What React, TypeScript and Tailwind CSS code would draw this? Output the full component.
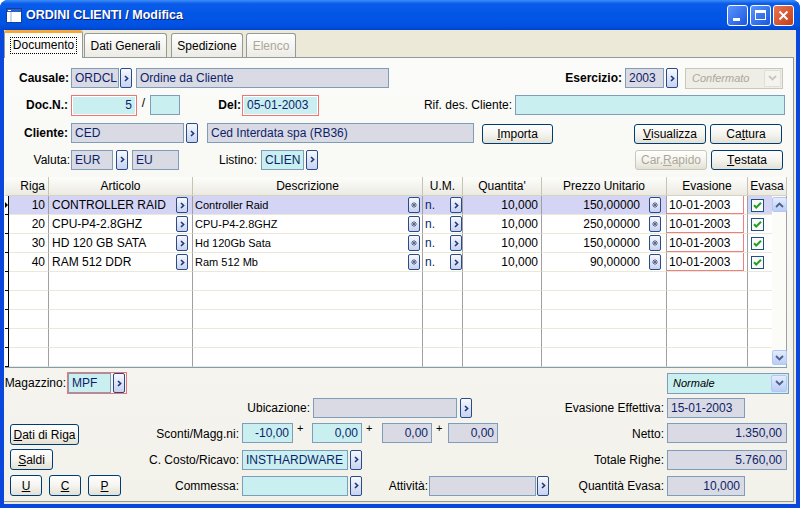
import React from 'react';

type Kids = { className?: string; children?: React.ReactNode };

function Chevron() {
  return (
    <svg width="5" height="7" viewBox="0 0 5 7">
      <path d="M1 1l2.6 2.5L1 6" fill="none" stroke="#1c3879" strokeWidth="1.6" />
    </svg>
  );
}

function ChevronDown({ color = '#4d6185' }: { color?: string }) {
  return (
    <svg width="9" height="6" viewBox="0 0 9 6">
      <path d="M1 1l3.5 3.5L8 1" fill="none" stroke={color} strokeWidth="1.8" />
    </svg>
  );
}

function ChevronUp() {
  return (
    <svg width="9" height="6" viewBox="0 0 9 6">
      <path d="M1 5l3.5-3.5L8 5" fill="none" stroke="#4d6185" strokeWidth="1.8" />
    </svg>
  );
}

function ArrowBtn({ className = 'h-[20px]' }: { className?: string }) {
  return (
    <div
      className={`w-[12px] shrink-0 rounded-[2px] border border-[#294b86] bg-gradient-to-b from-[#f7f8ff] to-[#c8d2f0] flex items-center justify-center ${className}`}
    >
      <Chevron />
    </div>
  );
}

function StarBtn() {
  return (
    <div className="w-[12px] h-[16px] shrink-0 rounded-[2px] border border-[#294b86] bg-gradient-to-b from-[#f7f8ff] to-[#c8d2f0] flex items-center justify-center">
      <svg width="6" height="6" viewBox="0 0 6 6">
        <path d="M3 0v6M0 3h6M1 1l4 4M5 1L1 5" stroke="#5a6787" strokeWidth="1" />
      </svg>
    </div>
  );
}

function Field({ className = '', children, cyan, right }: Kids & { cyan?: boolean; right?: boolean }) {
  return (
    <div
      className={`h-[20px] shrink-0 border border-[#7f9db9] ${cyan ? 'bg-[#c9eff0]' : 'bg-[#d9dae3]'} flex items-center px-[3px] text-[12px] text-[#0d1f6b] whitespace-nowrap overflow-hidden ${right ? 'justify-end' : ''} ${className}`}
    >
      {children}
    </div>
  );
}

function RedField({ className = '', children, right }: Kids & { right?: boolean }) {
  return (
    <div
      className={`h-[21px] shrink-0 border border-[#ef7575] shadow-[inset_0_0_0_1px_#ffffff] bg-[#c9eff0] flex items-center px-[4px] text-[12px] text-[#0d1f6b] ${right ? 'justify-end' : ''} ${className}`}
    >
      {children}
    </div>
  );
}

function Btn({ className = '', children, disabled }: Kids & { disabled?: boolean }) {
  return (
    <div
      className={`shrink-0 rounded-[3px] border ${disabled ? 'border-[#c9c7ba] text-[#aca899]' : 'border-[#003c74] text-black'} bg-gradient-to-b from-white via-[#f5f4ef] to-[#e3e1d4] flex items-center justify-center text-[12px] ${className}`}
    >
      {children}
    </div>
  );
}

function Label({ className = '', children, bold }: Kids & { bold?: boolean }) {
  return (
    <div className={`shrink-0 text-right text-[12px] whitespace-nowrap ${bold ? 'font-bold' : ''} ${className}`}>{children}</div>
  );
}

function CheckBox() {
  return (
    <svg width="13" height="13" viewBox="0 0 13 13">
      <rect x="0.5" y="0.5" width="12" height="12" fill="#fafafa" stroke="#1c5180" />
      <path d="M3 6.2l2.2 2.3L10 3.8" fill="none" stroke="#21a121" strokeWidth="2" />
    </svg>
  );
}

function TitleBar() {
  return (
    <div className="h-[30px] shrink-0 flex items-center bg-[linear-gradient(180deg,#3d8ef8_0%,#0b5ce9_12%,#0256e6_50%,#0252e2_85%,#0044cc_100%)]">
      <svg width="16" height="15" viewBox="0 0 16 15" className="ml-[6px]">
        <rect x="0.5" y="0.5" width="15" height="14" fill="#ffffff" stroke="#1b3f8f" />
        <rect x="1" y="1" width="14" height="3" fill="#2a5fd0" />
        <rect x="2" y="2" width="3" height="1" fill="#ffffff" />
        <path d="M5 4v10" stroke="#9db0d8" />
      </svg>
      <div className="ml-[4px] text-white font-bold text-[12.5px] [text-shadow:1px_1px_0_#0a1f7a]">ORDINI CLIENTI / Modifica</div>
      <div className="ml-auto mr-[6px] flex gap-[2px]">
        <div className="w-[21px] h-[21px] rounded-[3px] border border-white bg-gradient-to-br from-[#5d94fb] to-[#1a56e0] flex items-end pl-[5px] pb-[4px]">
          <div className="w-[7px] h-[3px] bg-white" />
        </div>
        <div className="w-[21px] h-[21px] rounded-[3px] border border-white bg-gradient-to-br from-[#5d94fb] to-[#1a56e0] flex items-center justify-center">
          <div className="w-[11px] h-[10px] border border-white border-t-[3px]" />
        </div>
        <div className="w-[21px] h-[21px] rounded-[3px] border border-white bg-gradient-to-br from-[#e8764f] to-[#c23d16] flex items-center justify-center">
          <svg width="11" height="11" viewBox="0 0 11 11">
            <path d="M1.5 1.5l8 8M9.5 1.5l-8 8" stroke="#ffffff" strokeWidth="2" />
          </svg>
        </div>
      </div>
    </div>
  );
}

function Tabs() {
  const tab = 'h-[24px] shrink-0 rounded-t-[3px] border-x border-t border-[#919b9c] bg-gradient-to-b from-white to-[#ecebe4] flex items-center justify-center text-[12px]';
  return (
    <div className="h-[27px] shrink-0 flex items-end">
      <div className="w-[79px] h-[28px] -mb-px relative z-10 rounded-t-[3px] border-x border-[#919b9c] border-t-[3px] border-t-[#f5a83a] bg-[#fcfcfb] flex items-center justify-center">
        <span className="border border-dotted border-black px-[2px] leading-[15px] text-[12px]">Documento</span>
      </div>
      <div className={`${tab} ml-[1px] w-[83px]`}>Dati Generali</div>
      <div className={`${tab} ml-[4px] w-[72px]`}>Spedizione</div>
      <div className={`${tab} ml-[3px] w-[50px] text-[#aca899]`}>Elenco</div>
    </div>
  );
}

const rows = [
  { n: '10', art: 'CONTROLLER RAID', desc: 'Controller Raid', prezzo: '150,00000' },
  { n: '20', art: 'CPU-P4-2.8GHZ', desc: 'CPU-P4-2.8GHZ', prezzo: '250,00000' },
  { n: '30', art: 'HD 120 GB SATA', desc: 'Hd 120Gb Sata', prezzo: '150,00000' },
  { n: '40', art: 'RAM 512 DDR', desc: 'Ram 512 Mb', prezzo: '90,00000' },
];

const cell = 'h-full shrink-0 border-b border-b-[#ebe8d8] border-r border-r-[#a0a0a0] flex items-center';
const head = 'h-full shrink-0 border-r border-r-[#c7c4b4] flex items-center justify-center text-[12px]';

function Grid() {
  const filled = [...rows, null, null, null, null, null];
  return (
    <div className="ml-[1px] mt-[7px] w-[782px] h-[191px] shrink-0 flex flex-col border-b border-[#7f9db9] bg-white">
      <div className="h-[19px] shrink-0 flex bg-gradient-to-b from-[#fdfdfb] to-[#ebeae2] border-b border-[#d6d3c4]">
        <div className={`${head} w-[44px] !justify-end pr-[3px]`}>Riga</div>
        <div className={`${head} w-[144px]`}>Articolo</div>
        <div className={`${head} w-[230px]`}>Descrizione</div>
        <div className={`${head} w-[40px]`}>U.M.</div>
        <div className={`${head} w-[79px]`}>Quantita'</div>
        <div className={`${head} w-[125px]`}>Prezzo Unitario</div>
        <div className={`${head} w-[81px]`}>Evasione</div>
        <div className={`${head} w-[39px]`}>Evasa</div>
      </div>
      <div className="flex flex-1">
        <div className="w-[767px] flex flex-col">
          {filled.map((r, i) => {
            const sel = i === 0;
            const bg = sel ? 'bg-[#d4d4f5]' : 'bg-white';
            return (
              <div key={i} className="h-[19px] shrink-0 flex text-[12px]">
                <div className="w-[4px] h-full shrink-0 border-r border-b border-black flex items-center">
                  {sel && (
                    <svg width="3" height="6" viewBox="0 0 3 6">
                      <path d="M0 0l3 3-3 3z" fill="#000" />
                    </svg>
                  )}
                </div>
                <div className={`${cell} ${bg} w-[40px] justify-end pr-[3px]`}>{r?.n}</div>
                <div className={`${cell} ${bg} w-[144px] pl-[3px] pr-[4px]`}>
                  {r && (
                    <>
                      <span className="flex-1 whitespace-nowrap">{r.art}</span>
                      <ArrowBtn className="h-[16px]" />
                    </>
                  )}
                </div>
                <div className={`${cell} ${bg} w-[230px] pl-[2px] pr-[2px]`}>
                  {r && (
                    <>
                      <span className="flex-1 text-[11px] whitespace-nowrap">{r.desc}</span>
                      <StarBtn />
                    </>
                  )}
                </div>
                <div className={`${cell} ${bg} w-[40px] pl-[2px]`}>
                  {r && (
                    <>
                      <span className="flex-1 text-[#0d1f6b]">n.</span>
                      <ArrowBtn className="h-[16px]" />
                    </>
                  )}
                </div>
                <div className={`${cell} ${bg} w-[79px] justify-end pr-[3px]`}>{r && '10,000'}</div>
                <div className={`${cell} ${bg} w-[125px] justify-end pr-[5px]`}>
                  {r && (
                    <>
                      <span className="mr-[9px]">{r.prezzo}</span>
                      <StarBtn />
                    </>
                  )}
                </div>
                <div className={`${cell} bg-white w-[81px]`}>
                  {r && (
                    <div className="w-[77px] h-full border-r border-b border-[#f08080] flex items-center pl-[2px]">10-01-2003</div>
                  )}
                </div>
                <div className={`h-full shrink-0 border-b border-b-[#ebe8d8] ${bg} w-[24px] flex items-center pl-[3px]`}>
                  {r && <CheckBox />}
                </div>
              </div>
            );
          })}
        </div>
        <div className="w-[15px] flex flex-col justify-between pt-[1px] pb-[2px] bg-[#fbfbf8] border-r border-[#a0a0a0]">
          <div className="w-[15px] h-[15px] rounded-[2px] border border-[#b4c7f0] bg-gradient-to-b from-[#e4ecfe] to-[#b8cdf8] flex items-center justify-center">
            <ChevronUp />
          </div>
          <div className="w-[15px] h-[15px] rounded-[2px] border border-[#b4c7f0] bg-gradient-to-b from-[#e4ecfe] to-[#b8cdf8] flex items-center justify-center">
            <ChevronDown />
          </div>
        </div>
      </div>
    </div>
  );
}

function Plus({ className = '' }: { className?: string }) {
  return <div className={`shrink-0 self-start text-[11px] leading-[11px] pl-[4px] ${className}`}>+</div>;
}

export default function App() {
  return (
    <div className="w-[800px] h-[508px] bg-white">
      <div className="w-[800px] h-[508px] flex flex-col bg-[#0a47dc] rounded-t-[8px] overflow-hidden font-['Liberation_Sans',Arial,sans-serif] text-[12px] text-black">
        <TitleBar />
        <div className="flex-1 mx-[4px] mb-[4px] bg-[#ece9d8] flex flex-col">
          <Tabs />
          <div className="w-[790px] flex-1 mb-[2px] border-t border-r border-b border-[#919b9c] bg-gradient-to-b from-[#fbfbf9] to-[#f2f1ea] flex flex-col">
            {/* testata */}
            <div className="mt-[10px] h-[20px] flex items-center">
              <Label bold className="w-[66px] pr-[1px]">Causale:</Label>
              <Field className="ml-[1px] w-[48px]">ORDCL</Field>
              <ArrowBtn className="ml-[1px] h-[20px]" />
              <Field className="ml-[4px] w-[253px]">Ordine da Cliente</Field>
              <Label bold className="w-[233px]">Esercizio:</Label>
              <Field className="ml-[3px] w-[39px]">2003</Field>
              <ArrowBtn className="ml-[2px] h-[20px]" />
              <div className="ml-[7px] w-[98px] h-[21px] border border-[#c9c7ba] bg-[#eeede6] flex items-center pl-[6px] pr-[1px]">
                <span className="flex-1 italic text-[11px] text-[#aca899]">Confermato</span>
                <div className="w-[17px] h-[17px] border border-[#e2e0d6] bg-[#f4f3ee] flex items-center justify-center">
                  <ChevronDown color="#c9c7ba" />
                </div>
              </div>
            </div>
            <div className="mt-[6px] h-[22px] flex items-center">
              <Label bold className="w-[66px] pr-[2px]">Doc.N.:</Label>
              <RedField right className="ml-[1px] w-[66px]">5</RedField>
              <div className="w-[13px] self-start text-center text-[12px]">/</div>
              <Field cyan className="w-[30px]" />
              <Label bold className="w-[62px] pr-[1px]">Del:</Label>
              <RedField className="w-[77px]">05-01-2003</RedField>
              <Label className="w-[194px] pr-[1px]">Rif. des. Cliente:</Label>
              <Field cyan className="ml-[2px] w-[270px]" />
            </div>
            <div className="mt-[6px] h-[22px] flex items-center">
              <Label bold className="w-[66px] pr-[2px]">Cliente:</Label>
              <Field className="ml-[1px] w-[113px]">CED</Field>
              <ArrowBtn className="ml-[2px] h-[20px]" />
              <Field className="ml-[9px] w-[267px]">Ced Interdata spa (RB36)</Field>
              <Btn className="ml-[8px] w-[71px] h-[20px] self-end">
                <span className="underline">I</span>mporta
              </Btn>
              <Btn className="ml-[81px] w-[72px] h-[20px] self-end">
                <span className="underline">V</span>isualizza
              </Btn>
              <Btn className="ml-[4px] w-[72px] h-[20px] self-end">
                Ca<span className="underline">t</span>tura
              </Btn>
            </div>
            <div className="mt-[5px] h-[21px] flex items-center">
              <Label className="w-[66px]">Valuta:</Label>
              <Field className="ml-[1px] w-[42px]">EUR</Field>
              <ArrowBtn className="ml-[3px] h-[20px]" />
              <Field className="ml-[4px] w-[47px]">EU</Field>
              <Label className="w-[80px] pr-[2px]">Listino:</Label>
              <Field cyan className="ml-[2px] w-[43px]">CLIEN</Field>
              <ArrowBtn className="ml-[2px] h-[20px]" />
              <Btn disabled className="ml-[317px] w-[72px] h-[20px]">
                Car.<span className="underline">R</span>apido
              </Btn>
              <Btn className="ml-[4px] w-[72px] h-[20px]">
                <span className="underline">T</span>estata
              </Btn>
            </div>

            <Grid />

            {/* piede */}
            <div className="mt-[4px] h-[22px] flex items-center pr-[4px]">
              <Label className="w-[63px] pr-[1px]">Magazzino:</Label>
              <div className="h-[22px] border border-[#ef7575] flex items-center pr-[1px]">
                <Field cyan className="w-[43px]">MPF</Field>
                <ArrowBtn className="ml-[2px] h-[20px]" />
              </div>
              <div className="ml-auto w-[122px] h-[21px] border border-[#7f9db9] bg-[#c9eff0] flex items-center pl-[5px] pr-[1px]">
                <span className="flex-1 italic text-[11px]">Normale</span>
                <div className="w-[16px] h-[17px] rounded-[2px] border border-[#b4c7f0] bg-gradient-to-b from-[#e4ecfe] to-[#b8cdf8] flex items-center justify-center">
                  <ChevronDown />
                </div>
              </div>
            </div>
            <div className="mt-[4px] h-[20px] flex items-center">
              <Label className="w-[307px] pr-[1px]">Ubicazione:</Label>
              <Field className="ml-[2px] w-[144px]" />
              <ArrowBtn className="ml-[3px] h-[20px]" />
              <Label className="w-[193px] pr-[1px]">Evasione Effettiva:</Label>
              <Field className="ml-[2px] w-[78px]">15-01-2003</Field>
            </div>
            <div className="mt-[5px] h-[22px] flex items-center">
              <Btn className="ml-[6px] w-[69px] h-[21px] self-end">
                <span className="underline">D</span>ati di Riga
              </Btn>
              <Label className="w-[162px] pr-[2px]">Sconti/Magg.ni:</Label>
              <Field cyan right className="ml-[1px] w-[51px] self-start">-10,00</Field>
              <Plus className="w-[19px]" />
              <Field cyan right className="w-[50px] self-start">0,00</Field>
              <Plus className="w-[20px]" />
              <Field right className="w-[50px] self-start">0,00</Field>
              <Plus className="w-[16px]" />
              <Field right className="w-[50px] self-start">0,00</Field>
              <Label className="w-[168px] pr-[2px]">Netto:</Label>
              <Field right className="ml-[1px] w-[120px] self-start pr-[4px]">1.350,00</Field>
            </div>
            <div className="mt-[4px] h-[21px] flex items-center">
              <Btn className="ml-[6px] w-[43px] h-[21px]">
                <span className="underline">S</span>aldi
              </Btn>
              <Label className="w-[188px] pr-[2px]">C. Costo/Ricavo:</Label>
              <Field cyan className="ml-[1px] w-[106px]">INSTHARDWARE</Field>
              <ArrowBtn className="ml-[2px] h-[20px]" />
              <Label className="w-[304px] pr-[2px]">Totale Righe:</Label>
              <Field right className="ml-[1px] w-[120px] pr-[4px]">5.760,00</Field>
            </div>
            <div className="mt-[5px] h-[21px] flex items-center">
              <Btn className="ml-[6px] w-[32px] h-[21px]">
                <span className="underline">U</span>
              </Btn>
              <Btn className="ml-[7px] w-[32px] h-[21px]">
                <span className="underline">C</span>
              </Btn>
              <Btn className="ml-[7px] w-[33px] h-[21px]">
                <span className="underline">P</span>
              </Btn>
              <Label className="w-[120px] pr-[2px]">Commessa:</Label>
              <Field cyan className="ml-[1px] w-[106px]" />
              <ArrowBtn className="ml-[2px] h-[20px]" />
              <Label className="w-[67px] pr-[1px]">Attività:</Label>
              <Field className="w-[107px]" />
              <ArrowBtn className="ml-[1px] h-[20px]" />
              <Label className="w-[117px] pr-[2px]">Quantità Evasa:</Label>
              <Field right className="ml-[1px] w-[78px] pr-[4px]">10,000</Field>
            </div>
          </div>
        </div>
      </div>
    </div>
  );
}
